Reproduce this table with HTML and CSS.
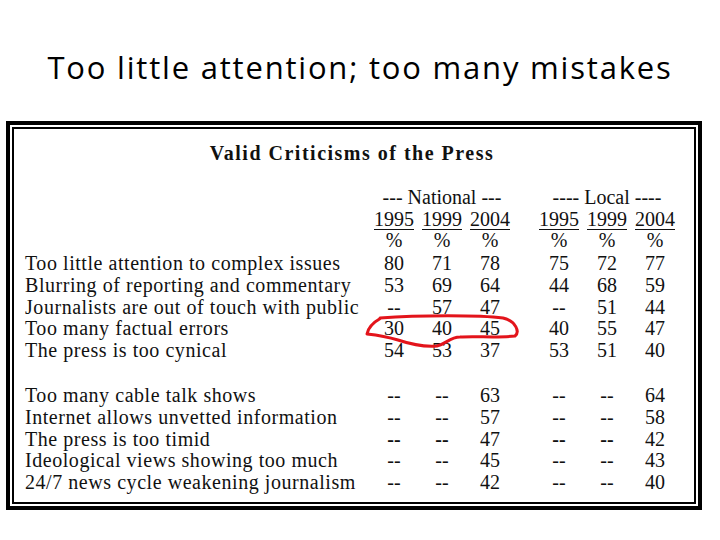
FILE: index.html
```html
<!DOCTYPE html>
<html>
<head>
<meta charset="utf-8">
<link rel="stylesheet" href="styles.css">
</head>
<body>
<div class="slide">
  <h1 class="title">Too little attention; too many mistakes</h1>
  <div class="frame">
    <div class="inner">
      <div class="grid">
        <div class="caption">Valid Criticisms of the Press</div>
        <div class="blank"></div>

        <div class="lbl"></div>
        <div class="group">--- National ---</div>
        <div class="sp"></div>
        <div class="group">---- Local ----</div>

        <div class="lbl"></div>
        <div class="n yr">1995</div><div class="n yr">1999</div><div class="n yr">2004</div>
        <div class="sp"></div>
        <div class="n yr">1995</div><div class="n yr">1999</div><div class="n yr">2004</div>

        <div class="lbl"></div>
        <div class="n">%</div><div class="n">%</div><div class="n">%</div>
        <div class="sp"></div>
        <div class="n">%</div><div class="n">%</div><div class="n">%</div>

        <div class="lbl">Too little attention to complex issues</div>
        <div class="n">80</div><div class="n">71</div><div class="n">78</div>
        <div class="sp"></div>
        <div class="n">75</div><div class="n">72</div><div class="n">77</div>

        <div class="lbl">Blurring of reporting and commentary</div>
        <div class="n">53</div><div class="n">69</div><div class="n">64</div>
        <div class="sp"></div>
        <div class="n">44</div><div class="n">68</div><div class="n">59</div>

        <div class="lbl">Journalists are out of touch with public</div>
        <div class="n">--</div><div class="n">57</div><div class="n">47</div>
        <div class="sp"></div>
        <div class="n">--</div><div class="n">51</div><div class="n">44</div>

        <div class="lbl">Too many factual errors</div>
        <div class="n">30</div><div class="n">40</div><div class="n">45</div>
        <div class="sp"></div>
        <div class="n">40</div><div class="n">55</div><div class="n">47</div>

        <div class="lbl">The press is too cynical</div>
        <div class="n">54</div><div class="n">53</div><div class="n">37</div>
        <div class="sp"></div>
        <div class="n">53</div><div class="n">51</div><div class="n">40</div>

        <div class="blank"></div>

        <div class="lbl">Too many cable talk shows</div>
        <div class="n">--</div><div class="n">--</div><div class="n">63</div>
        <div class="sp"></div>
        <div class="n">--</div><div class="n">--</div><div class="n">64</div>

        <div class="lbl">Internet allows unvetted information</div>
        <div class="n">--</div><div class="n">--</div><div class="n">57</div>
        <div class="sp"></div>
        <div class="n">--</div><div class="n">--</div><div class="n">58</div>

        <div class="lbl">The press is too timid</div>
        <div class="n b">--</div><div class="n b">--</div><div class="n">47</div>
        <div class="sp"></div>
        <div class="n b">--</div><div class="n b">--</div><div class="n">42</div>

        <div class="lbl">Ideological views showing too much</div>
        <div class="n">--</div><div class="n">--</div><div class="n">45</div>
        <div class="sp"></div>
        <div class="n">--</div><div class="n">--</div><div class="n">43</div>

        <div class="lbl">24/7 news cycle weakening journalism</div>
        <div class="n">--</div><div class="n">--</div><div class="n">42</div>
        <div class="sp"></div>
        <div class="n">--</div><div class="n">--</div><div class="n">40</div>
      </div>
    </div>
  </div>
  <svg class="mark" width="720" height="540" viewBox="0 0 720 540">
    <path d="M380 318 C420 315 480 315 503 318 C516 321 520 332 515 336 C500 338 475 336 460 337 C450 337 446 344 437 346 C425 347 410 344 398 340 C388 337 376 335 367 334 C368 328 374 322 381 318" fill="none" stroke="#e3141b" stroke-width="3" stroke-linejoin="round" stroke-linecap="round"/>
  </svg>
</div>
</body>
</html>
```
FILE: styles.css
```css
html, body {
  margin: 0;
  padding: 0;
  background: #fff;
}
.slide {
  position: relative;
  width: 720px;
  height: 540px;
  overflow: hidden;
}
.title {
  margin: 0;
  height: 121px;
  box-sizing: border-box;
  padding-top: 47px;
  font-family: "Open Sans", "Noto Sans", sans-serif;
  font-weight: 400;
  font-size: 31px;
  line-height: 40px;
  color: #000;
  text-align: center;
  letter-spacing: 1.8px;
}
.frame {
  margin-left: 6px;
  width: 696px;
  height: 389px;
  box-sizing: border-box;
  border: 4px solid #000;
  padding: 2px;
}
.inner {
  height: 100%;
  box-sizing: border-box;
  border: 2px solid #000;
  padding: 13px 0 0 11px;
}
.grid {
  display: grid;
  grid-template-columns: 345px 48px 48px 48px 21px 48px 48px 48px;
  grid-template-rows: 22px 22px 22px 22px 23px 21.75px 21.75px 21.75px 21.75px 21.75px 23.25px 21.75px 21.75px 21.75px 21.75px 21.75px;
  font-family: "Liberation Serif", "Times New Roman", serif;
  font-size: 20px;
  line-height: 21.75px;
  color: #111;
}
.caption {
  grid-column: 1 / -1;
  text-align: center;
  font-weight: bold;
  font-size: 20px;
  line-height: 22px;
  letter-spacing: 1.5px;
}
.blank {
  grid-column: 1 / -1;
}
.group {
  grid-column: span 3;
  text-align: center;
  line-height: 22px;
}
.lbl {
  white-space: nowrap;
  letter-spacing: 0.55px;
}
.n {
  text-align: center;
}
.yr {
  line-height: 22px;
  text-decoration: underline;
  text-decoration-thickness: 1px;
  text-underline-offset: 3px;
}
.b {
  font-weight: bold;
}
.mark {
  position: absolute;
  left: 0;
  top: 0;
  pointer-events: none;
}
```
